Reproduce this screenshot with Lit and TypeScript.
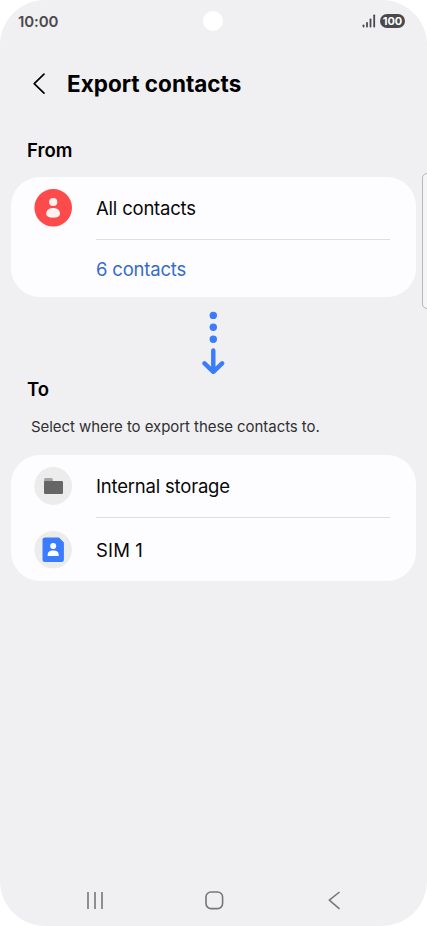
import { LitElement, html, css, svg } from "lit";
import { customElement } from "lit/decorators.js";

const backIcon = html`<svg class="back" width="14" height="24" viewBox="0 0 14 24">
  <path d="M12 2.2 2.2 11.6l9.8 9.6" fill="none" stroke="#000" stroke-width="1.7" stroke-linecap="round" stroke-linejoin="round" />
</svg>`;

const bars = [
  [0.6, 10.9, 3.1],
  [4.1, 8.4, 5.6],
  [7.6, 5, 9],
  [11.3, 1, 13],
];

const signalIcon = html`<svg class="signal" width="14" height="15" viewBox="0 0 14 15">
  ${bars.map(([x, y, h]) => svg`<rect x=${x} y=${y - 0.5} width="1.8" height=${h} rx="0.8" fill="#4a4a4c" />`)}
</svg>`;

const personIcon = html`<svg width="38" height="38" viewBox="0 0 38 38">
  <circle cx="19.2" cy="18.8" r="18.8" fill="#fd4a4a" />
  <circle cx="19.2" cy="13" r="4.1" fill="#fff3f1" />
  <path d="M12.2 24.8C12.2 21 15.2 18.9 19.1 18.9S26 21 26 24.8C26 27.6 22.7 28.7 19.1 28.7S12.2 27.6 12.2 24.8Z" fill="#fff3f1" />
</svg>`;

const folderIcon = html`<svg width="38" height="38" viewBox="0 0 38 38">
  <circle cx="19.2" cy="19" r="18.9" fill="#ececec" />
  <path d="M10 15v-2.4q0-1.5 1.5-1.5h5.7q1.2 0 1.6 1.3l.4 2.6z" fill="#a5a5a5" />
  <rect x="10" y="14" width="19" height="13" rx="1.2" fill="#666" />
</svg>`;

const simIcon = html`<svg width="38" height="38" viewBox="0 0 38 38">
  <circle cx="19.2" cy="18.8" r="18.8" fill="#ececec" />
  <path d="M11 6.4h14l4.9 5.2v16.8q0 2.5-2.5 2.5H11q-2.5 0-2.5-2.5V8.9q0-2.5 2.5-2.5Z" fill="#3b7bfd" />
  <circle cx="19.2" cy="15" r="3" fill="#fff" />
  <path d="M13.7 25.1V23.8C13.7 21 16 19.6 19.2 19.6S24.7 21 24.7 23.8V25.1Z" fill="#fff" />
</svg>`;

const arrowIcon = html`<svg width="24" height="66" viewBox="0 0 24 66">
  <g fill="#3b7cf8">
    <circle cx="12.3" cy="5.4" r="3.7" />
    <circle cx="12.3" cy="17.2" r="3.7" />
    <circle cx="12.3" cy="29.2" r="3.7" />
  </g>
  <path d="M12.3 40.4V61.5M3.5 53.3l8.8 8.5 8.8-8.5" fill="none" stroke="#3b7cf8" stroke-width="4.4" stroke-linecap="round" stroke-linejoin="round" />
</svg>`;

@customElement("app-root")
export class AppRoot extends LitElement {
  static styles = css`
    :host {
      display: block;
      background: #fff;
      font-family: Inter, Roboto, sans-serif;
      color: #080808;
    }
    .screen {
      position: relative;
      box-sizing: border-box;
      width: 427px;
      height: 926px;
      overflow: hidden;
      display: flex;
      flex-direction: column;
      background: #f0f0f3;
      border-radius: 45px;
    }
    svg { display: block; flex: none; }
    .status {
      height: 42px;
      flex: none;
      display: grid;
      grid-template-columns: 1fr 20px 1fr;
      align-items: center;
      padding: 0 22px 0 18px;
      color: #4a4a4c;
    }
    .time { font-size: 15px; font-weight: 600; letter-spacing: -0.1px; }
    .camera { width: 20px; height: 20px; border-radius: 50%; background: #fff; margin-left: 1.8px; }
    .indicators { display: flex; justify-content: flex-end; align-items: center; gap: 4px; }
    .battery {
      width: 25px;
      height: 14px;
      line-height: 14px;
      border-radius: 7px;
      background: #4a4a4c;
      color: #fff;
      font-size: 11px;
      font-weight: 700;
      text-align: center;
    }
    .header { height: 84px; flex: none; display: flex; align-items: center; gap: 21px; padding-left: 32px; }
    h1 { margin: 0; font-size: 22.5px; font-weight: 700; line-height: 28px; color: #000; }
    h2 { margin: 0 0 0 27px; font-size: 18.5px; font-weight: 600; line-height: 24px; color: #000; }
    .from { margin-top: 12px; }
    .to { margin-top: 1px; }
    .card {
      margin: 0 11px;
      width: 405px;
      flex: none;
      background: #fdfdff;
      border-radius: 29px;
    }
    .source { margin-top: 15px; height: 120px; }
    .target { margin-top: 18px; height: 126px; }
    .row { display: grid; grid-template-columns: 62px 1fr; align-items: center; padding-left: 23px; height: 62px; }
    .source .second { height: 58px; }
    .target .second { height: 63px; }
    .rule { height: 1px; margin: 0 26px 0 85px; background: #dedee1; }
    .label { font-size: 18.5px; line-height: 24px; letter-spacing: -0.2px; white-space: nowrap; }
    .label.sim { letter-spacing: 0.15px; }
    .count { grid-column: 2; color: #376bc9; }
    .arrow { height: 66px; margin: 13px 0 0 201px; flex: none; }
    .hint { margin: 16px 0 0 31px; font-size: 15px; letter-spacing: -0.06px; line-height: 20px; color: #303032; white-space: nowrap; }
    .edge {
      position: absolute;
      left: 422px;
      top: 173px;
      width: 12px;
      height: 134px;
      border: 1px solid #b7b7ba;
      border-radius: 5px;
      background: #f5f5f7;
    }
    .nav { margin-top: auto; height: 52px; flex: none; display: flex; }
  `;

  render() {
    return html`<main class="screen">
      <div class="status">
        <span class="time">10:00</span>
        <span class="camera"></span>
        <span class="indicators">${signalIcon}<span class="battery">100</span></span>
      </div>
      <header class="header">${backIcon}<h1>Export contacts</h1></header>
      <h2 class="from">From</h2>
      <section class="card source">
        <div class="row">${personIcon}<span class="label">All contacts</span></div>
        <div class="rule"></div>
        <div class="row second"><span class="label count">6 contacts</span></div>
      </section>
      <div class="arrow">${arrowIcon}</div>
      <h2 class="to">To</h2>
      <p class="hint">Select where to export these contacts to.</p>
      <section class="card target">
        <div class="row">${folderIcon}<span class="label">Internal storage</span></div>
        <div class="rule"></div>
        <div class="row second">${simIcon}<span class="label sim">SIM 1</span></div>
      </section>
      <div class="edge"></div>
      <nav class="nav">
        <svg width="427" height="52" viewBox="0 0 427 52" fill="none" stroke="#77777a" stroke-width="1.6">
          <path d="M88 18v17M95 18v17M102 18v17" />
          <rect x="206" y="18" width="16.6" height="16.6" rx="5" />
          <path d="M339.5 18 329.3 26.2l10.2 8.6" stroke-linejoin="round" />
        </svg>
      </nav>
    </main>`;
  }
}
